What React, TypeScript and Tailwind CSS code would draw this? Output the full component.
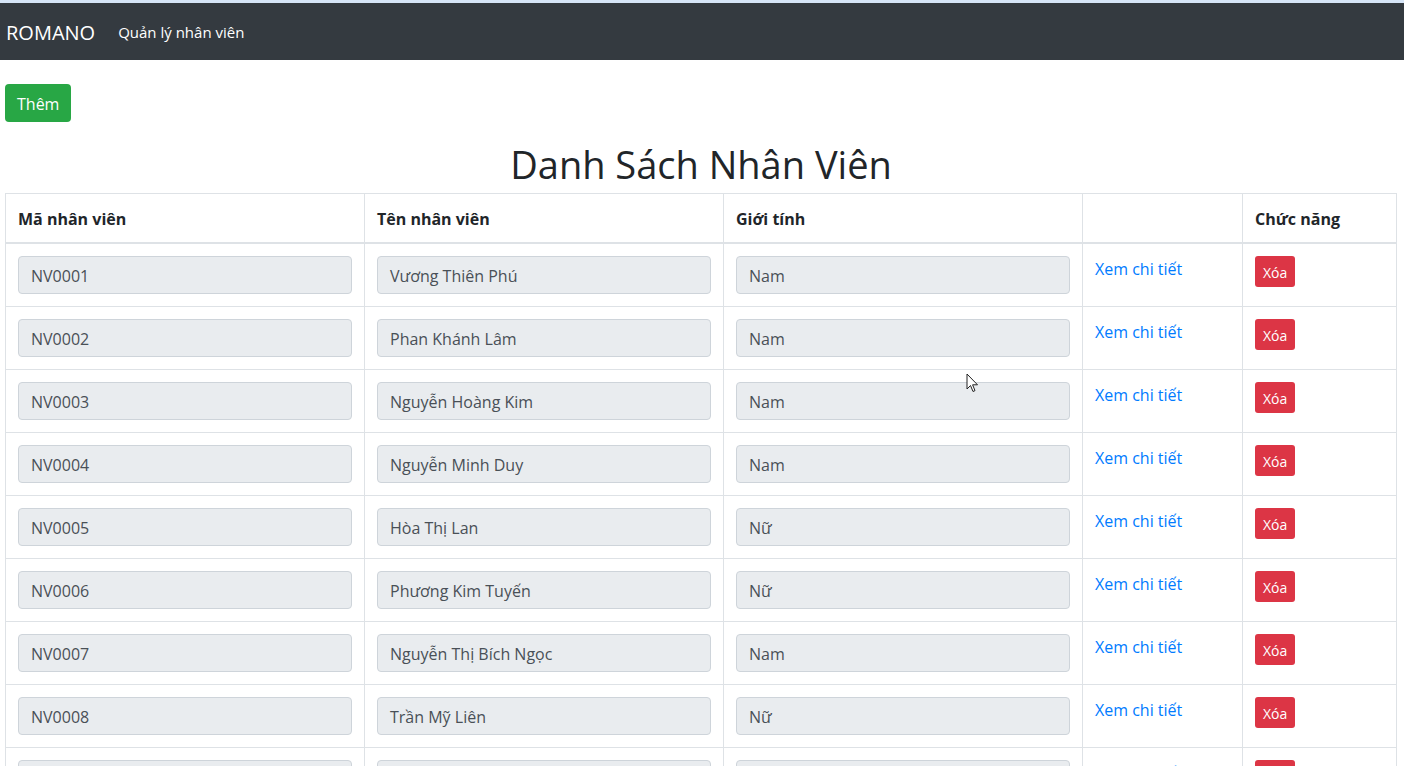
import React from "react";

type Employee = { id: string; name: string; gender: string };

const employees: Employee[] = [
  { id: "NV0001", name: "Vương Thiên Phú", gender: "Nam" },
  { id: "NV0002", name: "Phan Khánh Lâm", gender: "Nam" },
  { id: "NV0003", name: "Nguyễn Hoàng Kim", gender: "Nam" },
  { id: "NV0004", name: "Nguyễn Minh Duy", gender: "Nam" },
  { id: "NV0005", name: "Hòa Thị Lan", gender: "Nữ" },
  { id: "NV0006", name: "Phương Kim Tuyến", gender: "Nữ" },
  { id: "NV0007", name: "Nguyễn Thị Bích Ngọc", gender: "Nam" },
  { id: "NV0008", name: "Trần Mỹ Liên", gender: "Nữ" },
  { id: "NV0009", name: "Lê Văn Tâm", gender: "Nam" },
];

const Cursor = () => (
  <svg
    className="absolute left-[966px] top-[373px] pointer-events-none"
    width="13"
    height="20"
    viewBox="0 0 13 20"
  >
    <path
      d="M1 1 L1 16 L4.5 12.5 L7 18.5 L9 17.6 L6.6 11.8 L11.5 11.8 Z"
      fill="white"
      stroke="#222"
      strokeWidth="1"
      strokeLinejoin="round"
    />
  </svg>
);

const ReadonlyField = ({ value }: { value: string }) => (
  <div className="h-[38px] w-full rounded-[4px] border border-[#ced4da] bg-[#e9ecef] px-[12px] pt-[1px] flex items-center text-[16px] text-[#495057]">
    {value}
  </div>
);

const App = () => {
  return (
    <div
      className="relative min-h-screen bg-white text-[#212529]"
      style={{ fontFamily: '"Open Sans", "Noto Sans", sans-serif' }}
    >
      <div className="h-[3px] bg-[#d6e5f7]" />
      <nav className="h-[57px] bg-[#343a40] flex items-center px-[6px] pt-[2px]">
        <span className="text-[20px] text-white mr-[23px]">ROMANO</span>
        <span className="text-[15px] text-white">Quản lý nhân viên</span>
      </nav>

      <div className="pl-[5px] pr-[7px]">
        <button className="mt-[24px] h-[38px] px-[12px] pt-[2px] rounded-[4px] bg-[#28a745] text-white text-[16px]">
          Thêm
        </button>

        <h1 className="mt-[18px] mb-[5px] h-[48px] text-center text-[38px] leading-[48px] font-normal">
          Danh Sách Nhân Viên
        </h1>

        <table className="w-full border-collapse border border-[#dee2e6] text-[16px]">
          <colgroup>
            <col className="w-[359px]" />
            <col className="w-[359px]" />
            <col className="w-[359px]" />
            <col className="w-[160px]" />
            <col />
          </colgroup>
          <thead>
            <tr>
              <th className="border border-[#dee2e6] border-b-2 px-[12px] pt-[13px] pb-[11px] text-left font-bold leading-[24px]">
                Mã nhân viên
              </th>
              <th className="border border-[#dee2e6] border-b-2 px-[12px] pt-[13px] pb-[11px] text-left font-bold leading-[24px]">
                Tên nhân viên
              </th>
              <th className="border border-[#dee2e6] border-b-2 px-[12px] pt-[13px] pb-[11px] text-left font-bold leading-[24px]">
                Giới tính
              </th>
              <th className="border border-[#dee2e6] border-b-2 px-[12px] pt-[13px] pb-[11px]" />
              <th className="border border-[#dee2e6] border-b-2 px-[12px] pt-[13px] pb-[11px] text-left font-bold leading-[24px]">
                Chức năng
              </th>
            </tr>
          </thead>
          <tbody>
            {employees.map((e) => (
              <tr key={e.id}>
                <td className="border border-[#dee2e6] p-[12px] align-top">
                  <ReadonlyField value={e.id} />
                </td>
                <td className="border border-[#dee2e6] p-[12px] align-top">
                  <ReadonlyField value={e.name} />
                </td>
                <td className="border border-[#dee2e6] p-[12px] align-top">
                  <ReadonlyField value={e.gender} />
                </td>
                <td className="border border-[#dee2e6] px-[12px] pt-[13px] pb-[11px] align-top leading-[24px]">
                  <a href="#" className="text-[#007bff]">
                    Xem chi tiết
                  </a>
                </td>
                <td className="border border-[#dee2e6] p-[12px] align-top">
                  <button className="h-[31px] px-[8px] pt-[2px] rounded-[3px] bg-[#dc3545] text-white text-[14px] leading-[21px]">
                    Xóa
                  </button>
                </td>
              </tr>
            ))}
          </tbody>
        </table>
      </div>

      <Cursor />
    </div>
  );
};

export default App;
